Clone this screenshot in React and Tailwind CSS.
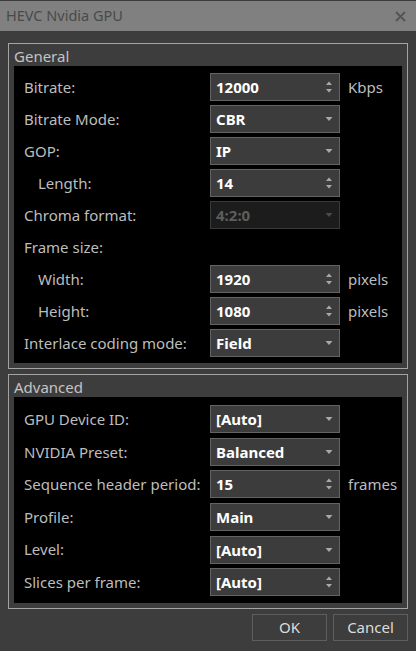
import React from 'react';

const font = { fontFamily: '"Noto Sans", "Open Sans", sans-serif' };

const Spin = () => (
  <svg width="8" height="16" viewBox="0 0 8 16" className="absolute right-[6px] top-1/2 -translate-y-1/2">
    <path d="M1 6 L4 2.5 L7 6 Z" fill="#a8a8a8" />
    <path d="M1 10 L4 13.5 L7 10 Z" fill="#a8a8a8" />
  </svg>
);

const Caret = ({ dim }) => (
  <svg width="8" height="6" viewBox="0 0 8 6" className="absolute right-[6px] top-1/2 -translate-y-1/2">
    <path d="M0.5 1 L4 5 L7.5 1 Z" fill={dim ? '#4a4a4a' : '#a8a8a8'} />
  </svg>
);

const Field = ({ value, kind, disabled }) => (
  <div
    className={
      'relative w-[130px] h-[28px] flex items-center pl-[5px] border text-[15px] font-bold ' +
      (disabled
        ? 'bg-[#1c1c1c] border-[#3a3a3a] text-[#5e5e5e]'
        : 'bg-[#3c3c3c] border-[#636363] text-white')
    }
  >
    <span className="leading-none pt-[1px]">{value}</span>
    {kind === 'spin' ? <Spin /> : <Caret dim={disabled} />}
  </div>
);

const Row = ({ label, indent, value, kind, unit, disabled, tall }) => (
  <div className={'flex items-center ' + (tall ? 'h-[32.6px]' : 'h-[32px]')}>
    <div className={'w-[196px] text-[15px] text-[#bdbdbd] whitespace-nowrap ' + (indent ? 'pl-[24px]' : 'pl-[10px]')}>{label}</div>
    {value !== undefined && <Field value={value} kind={kind} disabled={disabled} />}
    {unit && <div className="pl-[8px] text-[15px] text-[#bdbdbd]">{unit}</div>}
  </div>
);

const Group = ({ title, children, pt }) => (
  <div className="border border-[#a3a3a3] px-[5px] pb-[5px]">
    <div className="h-[22px] flex items-center text-[15px] text-[#c4c4c4] leading-none pt-[2px]">{title}</div>
    <div className={'bg-black pb-[4px] ' + pt}>{children}</div>
  </div>
);

export default function App() {
  return (
    <div className="w-[416px] h-[651px] bg-[#3d3d3d] flex flex-col border-t border-[#3a3a3a]" style={font}>
      <div className="h-[30px] bg-[#808080] flex items-center justify-between pl-[6px] pr-[10px]">
        <span className="text-[14.5px] text-[#4a4a4a]">HEVC Nvidia GPU</span>
        <svg width="11" height="11" viewBox="0 0 11 11">
          <path d="M1 1 L10 10 M10 1 L1 10" stroke="#555" strokeWidth="2" />
        </svg>
      </div>
      <div className="flex flex-col gap-[5px] px-[8px] pt-[12px]">
        <Group title="General" pt="pt-[5px]">
          <Row label="Bitrate:" value="12000" kind="spin" unit="Kbps" />
          <Row label="Bitrate Mode:" value="CBR" />
          <Row label="GOP:" value="IP" />
          <Row label="Length:" indent value="14" kind="spin" />
          <Row label="Chroma format:" value="4:2:0" disabled />
          <Row label="Frame size:" />
          <Row label="Width:" indent value="1920" kind="spin" unit="pixels" />
          <Row label="Height:" indent value="1080" kind="spin" unit="pixels" />
          <Row label="Interlace coding mode:" value="Field" />
        </Group>
        <Group title="Advanced" pt="pt-[6px]">
          <Row tall label="GPU Device ID:" value="[Auto]" />
          <Row tall label="NVIDIA Preset:" value="Balanced" />
          <Row tall label="Sequence header period:" value="15" kind="spin" unit="frames" />
          <Row tall label="Profile:" value="Main" />
          <Row tall label="Level:" value="[Auto]" />
          <Row tall label="Slices per frame:" value="[Auto]" kind="spin" />
        </Group>
      </div>
      <div className="flex justify-end gap-[6px] px-[8px] pt-[5px]">
        <button className="w-[75px] h-[27px] border border-[#5e5e5e] text-[15px] text-[#dcdcdc]">OK</button>
        <button className="w-[75px] h-[27px] border border-[#5e5e5e] text-[15px] text-[#dcdcdc]">Cancel</button>
      </div>
    </div>
  );
}
